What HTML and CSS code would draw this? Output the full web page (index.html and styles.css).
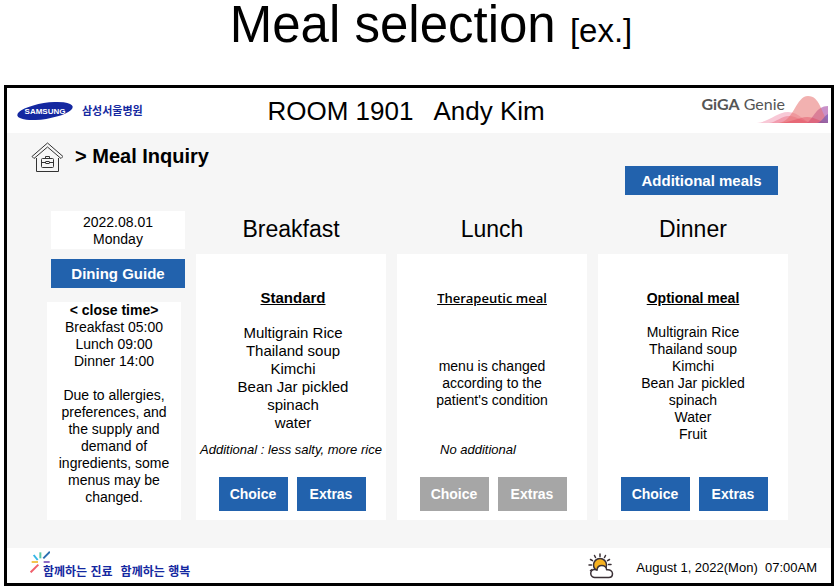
FILE: index.html
```html
<!DOCTYPE html>
<html lang="en">
<head>
  <meta charset="UTF-8" />
  <meta name="viewport" content="width=device-width, initial-scale=1.0"/>
  <title>Meal selection</title>
  <link rel="stylesheet" href="styles.css">
</head>
<body>
  <h1 class="page-title">Meal selection <small>[ex.]</small></h1>

  <div class="screen">
    <header class="header">
      <div class="hospital">
        <svg class="samsung" viewBox="0 0 56 22" role="img" aria-label="Samsung">
          <ellipse cx="28" cy="11" rx="28" ry="8" transform="rotate(-9 28 11)" fill="#1428a0"/>
          <text x="28" y="14" text-anchor="middle" class="samsung-text">SAMSUNG</text>
        </svg>
        <span class="hospital-name" lang="ko">삼성서울병원</span>
      </div>
      <div class="patient">
        <span>ROOM 1901</span>
        <span>Andy Kim</span>
      </div>
      <div class="genie">
        <span class="genie-name"><b>GiGA</b> Genie</span>
        <svg class="wave" viewBox="0 0 72 30" aria-hidden="true">
          <path d="M0 29 C12 28 20 18 31 18 S46 27 54 29 Z" fill="#f3a3bb" opacity="0.6"/>
          <path d="M12 29 C20 28 24 22 32 22 S46 28 56 29 Z" fill="#ec6f86" opacity="0.5"/>
          <path d="M50 29 C57 24 59 12 71 12 V29 Z" fill="#b76bb5" opacity="0.75"/>
          <path d="M22 29 C37 27 39 2 51 2 S64 19 71 27 V29 Z" fill="#e8716f" opacity="0.55"/>
          <path d="M20 29 C34 29 42 23 50 23 S64 28 71 29 Z" fill="#e0415a" opacity="0.4"/>
          <path d="M60 29 C65 28 67 22 71 20 V29 Z" fill="#6c55b0" opacity="0.6"/>
        </svg>
      </div>
    </header>

    <main class="main">
      <div class="toolbar">
        <div class="breadcrumb">
          <a href="#" class="home" aria-label="Home">
            <svg viewBox="0 0 32 32" fill="none" stroke="#333" stroke-width="1">
              <path d="M5.500 16v13.500h22V16"/>
              <path d="M16.500 1L1 14.500l2 2L16.500 5 30 16.500l2-2L16.500 1z"/>
              <rect x="10.500" y="16.500" width="12" height="9" rx="1"/>
              <path d="M14.500 16.500v-2h4v2M10.500 20.500h4.500M18 20.500h4.500"/>
              <rect x="15" y="19.500" width="3" height="2"/>
            </svg>
          </a>
          <h2>&gt; Meal Inquiry</h2>
        </div>
        <button type="button" class="btn btn-wide">Additional meals</button>
      </div>

      <div class="columns">
        <aside class="side">
          <p class="date">2022.08.01<br>Monday</p>
          <button type="button" class="btn guide">Dining Guide</button>
          <div class="notice">
            <b>&lt; close time&gt;</b>
            <p>Breakfast 05:00<br>Lunch 09:00<br>Dinner 14:00</p>
            <p class="notice-text">Due to allergies, preferences, and the supply and demand of ingredients, some menus may be changed.</p>
          </div>
        </aside>

        <section class="meal">
          <h3>Breakfast</h3>
          <div class="card">
            <h4 class="large">Standard</h4>
            <ul class="menu large">
              <li>Multigrain Rice</li>
              <li>Thailand soup</li>
              <li>Kimchi</li>
              <li>Bean Jar pickled</li>
              <li>spinach</li>
              <li>water</li>
            </ul>
            <p class="extra">Additional : less salty, more rice</p>
            <div class="actions">
              <button type="button" class="btn">Choice</button>
              <button type="button" class="btn">Extras</button>
            </div>
          </div>
        </section>

        <section class="meal">
          <h3>Lunch</h3>
          <div class="card">
            <h4 class="therapeutic">Therapeutic meal</h4>
            <p class="menu changed">menu is changed according to the patient's condition</p>
            <p class="extra none">No additional</p>
            <div class="actions">
              <button type="button" class="btn" disabled>Choice</button>
              <button type="button" class="btn" disabled>Extras</button>
            </div>
          </div>
        </section>

        <section class="meal">
          <h3>Dinner</h3>
          <div class="card">
            <h4>Optional meal</h4>
            <ul class="menu">
              <li>Multigrain Rice</li>
              <li>Thailand soup</li>
              <li>Kimchi</li>
              <li>Bean Jar pickled</li>
              <li>spinach</li>
              <li>Water</li>
              <li>Fruit</li>
            </ul>
            <div class="actions">
              <button type="button" class="btn">Choice</button>
              <button type="button" class="btn">Extras</button>
            </div>
          </div>
        </section>
      </div>
    </main>

    <footer class="footer">
      <div class="slogan">
        <svg class="spark" viewBox="90 33 60 66" fill="none" stroke-width="6" aria-hidden="true">
          <path d="M101 45l12 15" stroke="#35b6e6"/>
          <path d="M121 37v18" stroke="#5cc9a7"/>
          <path d="M130 55l20-20" stroke="#2a6fb0"/>
          <path d="M95 66h19" stroke="#f3c64f"/>
          <path d="M131 66h18" stroke="#8f6cc4"/>
          <path d="M92 97l23-23" stroke="#f0606c"/>
        </svg>
        <span class="slogan-text" lang="ko"><span>함께하는 진료</span><span>함께하는 행복</span></span>
      </div>
      <div class="status">
        <svg class="weather" viewBox="0 0 26 26" aria-hidden="true" fill="none" stroke="#3a3036" stroke-width="1.500" stroke-linecap="round" stroke-linejoin="round">
          <circle cx="12" cy="12" r="6.500" fill="#f6b221"/>
          <path d="M12 1v2.500M6.500 2.500l1 2M17.500 2.500l-1 2M2.500 6.500l2 1.200M21.500 6.500l-2 1.200M1 12h2.500M20.500 11.500H23M2.500 17.500l1.500-1"/>
          <path d="M7 24.500a4 4 0 0 1-.5-8c1-.1 1.800.2 2.500.7 .2-3 2.300-4.700 4.800-4.700 2.700 0 4.700 2 4.800 4.300 3.500-.6 5.900 1.200 5.900 3.900 0 2.200-1.600 3.800-3.800 3.800z" fill="#fff"/>
        </svg>
        <time datetime="2022-08-01T07:00">August 1, 2022(Mon)&nbsp; 07:00AM</time>
      </div>
    </footer>
  </div>
</body>
</html>
```

FILE: styles.css
```css
* {
  box-sizing: border-box;
}

body, h1, h2, h3, h4, p, ul {
  margin: 0;
  padding: 0;
}

body {
  display: flex;
  flex-direction: column;
  min-height: 100vh;
  padding: 0 2px 2px 4px;
  font-family: "Liberation Sans", Arial, sans-serif;
  font-size: 14px;
  line-height: 17px;
  color: #000;
  background-color: #fff;
}

svg {
  display: block;
}

.page-title {
  height: 85px;
  padding-left: 24px;
  text-align: center;
  font-size: 51px;
  font-weight: normal;
  line-height: 49px;
}

.page-title small {
  font-size: 33px;
}

.screen {
  flex: 1;
  display: flex;
  flex-direction: column;
  border: 3px solid #000;
}

/* header */
.header {
  display: flex;
  align-items: center;
  height: 45px;
  padding: 0 2px 0 10px;
}

.hospital {
  display: flex;
  align-items: center;
  gap: 9px;
}

.samsung {
  width: 56px;
  height: 22px;
}

.samsung-text {
  font-size: 8px;
  font-weight: bold;
  fill: #fff;
}

.hospital-name {
  font-family: "Noto Sans CJK KR", sans-serif;
  font-size: 11px;
  font-weight: bold;
  color: #1428a0;
}

.patient {
  flex: 1;
  display: flex;
  justify-content: center;
  gap: 20px;
  padding-right: 32px;
  font-size: 26px;
  line-height: 30px;
}

.genie {
  display: flex;
  align-items: flex-start;
  height: 34px;
}

.genie-name {
  margin-right: -28px;
  font-family: Lato, sans-serif;
  font-size: 16px;
  line-height: 20px;
  color: #555;
}

.wave {
  width: 72px;
  height: 30px;
}

/* main */
.main {
  flex: 1;
  padding: 9px 43px 28px 40px;
  background-color: #f6f6f6;
}

.toolbar {
  display: flex;
  justify-content: space-between;
  align-items: flex-start;
  padding: 0 10px 16px 0;
}

.toolbar .btn {
  margin-top: 24px;
}

.breadcrumb {
  display: flex;
  align-items: flex-start;
  gap: 12px;
  margin-left: -16px;
}

.breadcrumb h2 {
  font-size: 20px;
  line-height: 28px;
}

.home svg {
  width: 32px;
  height: 32px;
}

.btn {
  height: 34px;
  padding: 0;
  border: none;
  background-color: #2262ad;
  color: #fff;
  font-family: inherit;
  font-size: 14px;
  font-weight: bold;
  cursor: pointer;
}

.btn:disabled {
  background-color: #a6a6a6;
  cursor: default;
}

.btn-wide, .guide {
  height: 29px;
  font-size: 15px;
}

.btn-wide {
  width: 153px;
}

.columns {
  display: grid;
  grid-template-columns: 138px repeat(3, 1fr);
  gap: 11px;
}

.side {
  display: flex;
  flex-direction: column;
  align-items: flex-end;
  text-align: center;
}

.date, .guide, .notice {
  width: 134px;
}

.date {
  padding: 3px 0 1px;
  background-color: #fff;
}

.guide {
  margin: 10px 0 14px;
}

.notice {
  flex: 1;
  align-self: flex-start;
  padding: 0 8px;
  background-color: #fff;
}

.notice-text {
  margin-top: 17px;
}

.meal {
  display: flex;
  flex-direction: column;
  text-align: center;
}

.meal h3 {
  margin-bottom: 7px;
  font-size: 23px;
  font-weight: normal;
  line-height: 36px;
}

.card {
  flex: 1;
  display: flex;
  flex-direction: column;
  min-height: 266px;
  padding: 35px 0 9px;
  background-color: #fff;
}

.card h4 {
  margin-bottom: 17px;
  line-height: 18px;
  text-decoration: underline;
}

.card .large {
  padding-left: 4px;
  font-size: 15px;
  line-height: 18px;
}

.card .therapeutic {
  font-family: "Open Sans", "Noto Sans", sans-serif;
  font-size: 13px;
  font-weight: 600;
}

.menu {
  list-style: none;
}

.changed {
  padding: 34px 34px 0;
}

.extra {
  margin-top: auto;
  font-size: 13px;
  font-style: italic;
  white-space: nowrap;
}

.none {
  padding-right: 28px;
}

.actions {
  display: flex;
  justify-content: center;
  gap: 9px;
  margin-top: 19px;
  padding-left: 2px;
}

.card .menu + .actions {
  margin-top: auto;
}

.actions .btn {
  width: 69px;
}

/* footer */
.footer {
  display: flex;
  justify-content: space-between;
  height: 35px;
  padding: 3px 14px 0 23px;
}

.slogan {
  display: flex;
}

.spark {
  width: 20px;
  height: 22px;
}

.slogan-text {
  display: flex;
  gap: 8px;
  margin-left: -7px;
  padding-top: 11px;
  font-family: "Noto Sans CJK KR", sans-serif;
  font-size: 12px;
  font-weight: bold;
  color: #1428a0;
}

.status {
  display: flex;
  align-items: flex-start;
  gap: 22px;
  font-size: 13px;
}

.status time {
  padding-top: 8px;
}

.weather {
  width: 26px;
  height: 26px;
  margin-top: 2px;
}
```
